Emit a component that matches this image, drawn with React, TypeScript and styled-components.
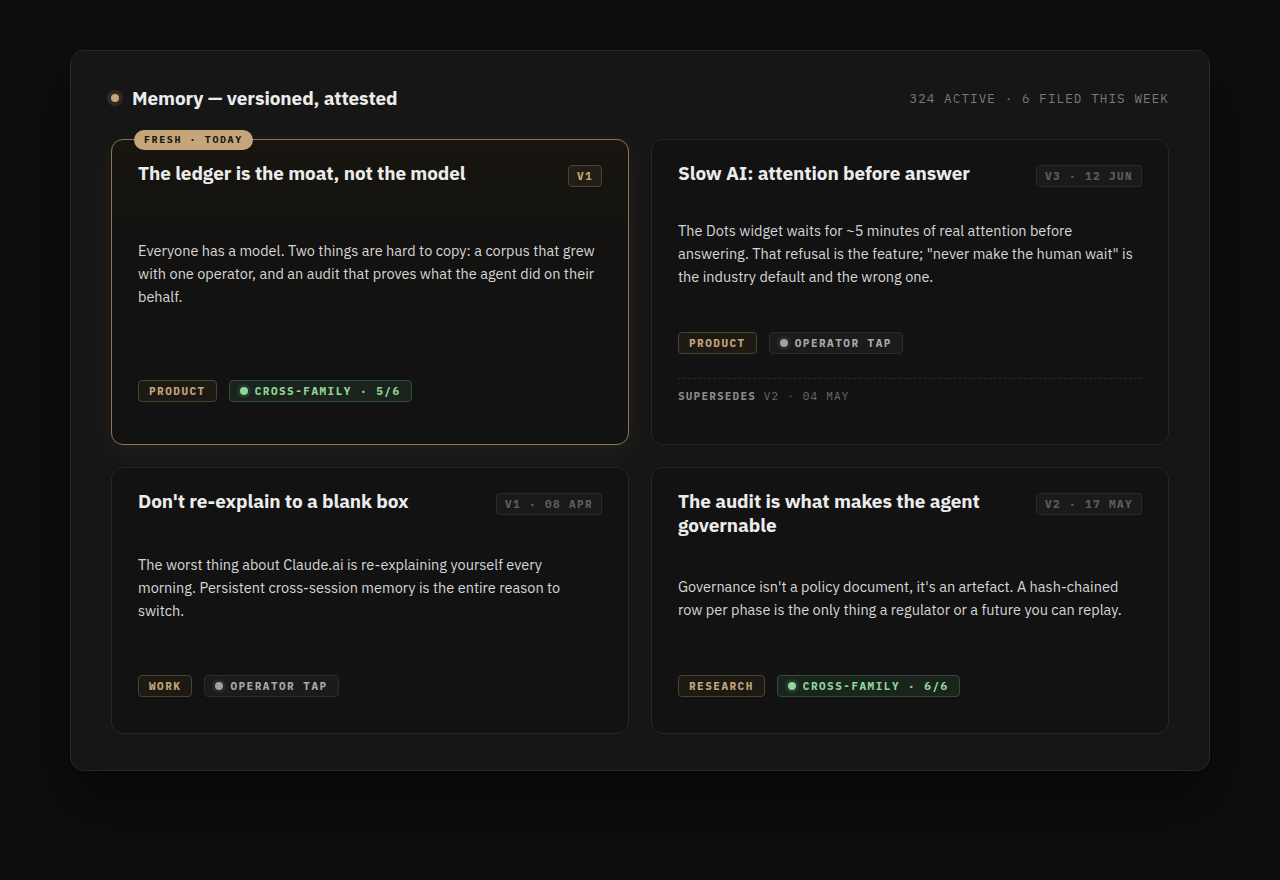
import React from "react";
import styled, { createGlobalStyle, css } from "styled-components";

type Tone = "topic" | "pass" | "tap";

type Tag = { label: string; tone: Tone };

type Entry = {
  title: string;
  version: string;
  body: string;
  tags: Tag[];
  fresh?: boolean;
  supersedes?: { label: string; ref: string };
};

const entries: Entry[] = [
  {
    title: "The ledger is the moat, not the model",
    version: "V1",
    body: "Everyone has a model. Two things are hard to copy: a corpus that grew with one operator, and an audit that proves what the agent did on their behalf.",
    tags: [
      { label: "PRODUCT", tone: "topic" },
      { label: "CROSS-FAMILY · 5/6", tone: "pass" },
    ],
    fresh: true,
  },
  {
    title: "Slow AI: attention before answer",
    version: "V3 · 12 JUN",
    body: 'The Dots widget waits for ~5 minutes of real attention before answering. That refusal is the feature; "never make the human wait" is the industry default and the wrong one.',
    tags: [
      { label: "PRODUCT", tone: "topic" },
      { label: "OPERATOR TAP", tone: "tap" },
    ],
    supersedes: { label: "SUPERSEDES", ref: "V2 · 04 MAY" },
  },
  {
    title: "Don't re-explain to a blank box",
    version: "V1 · 08 APR",
    body: "The worst thing about Claude.ai is re-explaining yourself every morning. Persistent cross-session memory is the entire reason to switch.",
    tags: [
      { label: "WORK", tone: "topic" },
      { label: "OPERATOR TAP", tone: "tap" },
    ],
  },
  {
    title: "The audit is what makes the agent governable",
    version: "V2 · 17 MAY",
    body: "Governance isn't a policy document, it's an artefact. A hash-chained row per phase is the only thing a regulator or a future you can replay.",
    tags: [
      { label: "RESEARCH", tone: "topic" },
      { label: "CROSS-FAMILY · 6/6", tone: "pass" },
    ],
  },
];

const sans = `"IBM Plex Sans", Inter, "Noto Sans", sans-serif`;
const mono = `"IBM Plex Mono", "DejaVu Sans Mono", "Liberation Mono", monospace`;

const GlobalStyle = createGlobalStyle`
  html, body {
    margin: 0;
    background: #0e0e0e;
    font-family: ${sans};
    -webkit-font-smoothing: antialiased;
  }
`;

const bodyGap = (e: Entry) => (e.fresh ? 52 : e.supersedes ? 32 : 38);

export default function App() {
  return (
    <>
      <GlobalStyle />
      <Page>
        <Panel>
          <Header>
            <TitleWrap>
              <Dot />
              <PanelTitle>Memory — versioned, attested</PanelTitle>
            </TitleWrap>
            <Stats>324 ACTIVE · 6 FILED THIS WEEK</Stats>
          </Header>
          <Grid>
            {entries.map((e) => (
              <Card key={e.title} $fresh={!!e.fresh}>
                {e.fresh && <FreshBadge>FRESH · TODAY</FreshBadge>}
                <CardHead>
                  <CardTitle>{e.title}</CardTitle>
                  <Version $fresh={!!e.fresh}>{e.version}</Version>
                </CardHead>
                <Body $gap={bodyGap(e)}>{e.body}</Body>
                <Tags $pinned={!e.supersedes}>
                  {e.tags.map((t) => (
                    <Chip key={t.label} $tone={t.tone}>
                      {t.tone !== "topic" && <ChipDot $tone={t.tone} />}
                      {t.label}
                    </Chip>
                  ))}
                </Tags>
                {e.supersedes && (
                  <Supersedes>
                    <strong>{e.supersedes.label}</strong> {e.supersedes.ref}
                  </Supersedes>
                )}
              </Card>
            ))}
          </Grid>
        </Panel>
      </Page>
    </>
  );
}

const Page = styled.div`
  min-height: 880px;
  padding: 50px 70px;
  box-sizing: border-box;
`;

const Panel = styled.div`
  background: #161616;
  border: 1px solid #282828;
  border-radius: 14px;
  padding: 35px 40px 36px;
  box-shadow: 0 30px 60px rgba(0, 0, 0, 0.5);
`;

const Header = styled.div`
  display: flex;
  align-items: center;
  justify-content: space-between;
  height: 24px;
  margin-bottom: 29px;
`;

const TitleWrap = styled.div`
  display: flex;
  align-items: center;
  gap: 13px;
`;

const Dot = styled.span`
  width: 8px;
  height: 8px;
  border-radius: 50%;
  background: #c4a67a;
  box-shadow: 0 0 0 4px rgba(196, 166, 122, 0.14);
`;

const PanelTitle = styled.h1`
  margin: 0;
  font-size: 19px;
  font-weight: 700;
  color: #ececec;
  letter-spacing: -0.1px;
`;

const Stats = styled.div`
  font-family: ${mono};
  font-size: 12.5px;
  letter-spacing: 1.15px;
  color: #7a7a7a;
`;

const Grid = styled.div`
  display: grid;
  grid-template-columns: 1fr 1fr;
  gap: 22px;
`;

const Card = styled.div<{ $fresh: boolean }>`
  position: relative;
  display: flex;
  flex-direction: column;
  background: #121212;
  border: 1px solid #262626;
  border-radius: 12px;
  padding: 21px 26px 36px;
  ${(p) =>
    p.$fresh &&
    css`
      padding-bottom: 42px;
      border-color: #8a7655;
      background: linear-gradient(180deg, #18150f 0%, #131210 30%, #121212 60%);
      box-shadow: 0 8px 28px rgba(196, 166, 122, 0.07);
    `}
`;

const FreshBadge = styled.span`
  position: absolute;
  top: -10px;
  left: 22px;
  background: #c4a67a;
  color: #1a1712;
  font-family: ${mono};
  font-size: 10px;
  font-weight: 700;
  letter-spacing: 1.6px;
  padding: 3px 10px;
  border-radius: 10px;
  line-height: 14px;
`;

const CardHead = styled.div`
  display: flex;
  align-items: flex-start;
  justify-content: space-between;
  gap: 20px;
`;

const CardTitle = styled.h2`
  margin: 0;
  font-size: 19px;
  font-weight: 700;
  line-height: 24px;
  color: #ececec;
  letter-spacing: -0.1px;
`;

const Version = styled.span<{ $fresh: boolean }>`
  flex-shrink: 0;
  margin-top: 4px;
  font-family: ${mono};
  font-size: 11px;
  font-weight: 700;
  letter-spacing: 1.4px;
  line-height: 14px;
  padding: 3px 8px;
  border-radius: 4px;
  color: #5e5e5e;
  background: #1a1a1a;
  border: 1px solid #2a2a2a;
  ${(p) =>
    p.$fresh &&
    css`
      color: #c4a67a;
      background: #221d15;
      border-color: #4e4332;
    `}
`;

const Body = styled.p<{ $gap: number }>`
  margin: ${(p) => p.$gap}px 0 0;
  font-size: 14.5px;
  line-height: 23px;
  color: #d6d6d6;
`;

const Tags = styled.div<{ $pinned: boolean }>`
  display: flex;
  gap: 12px;
  margin-top: ${(p) => (p.$pinned ? "auto" : "44px")};
  padding-top: ${(p) => (p.$pinned ? "53px" : "0")};
`;

const Chip = styled.span<{ $tone: Tone }>`
  display: inline-flex;
  align-items: center;
  gap: 7px;
  font-family: ${mono};
  font-size: 11px;
  font-weight: 700;
  letter-spacing: 1.5px;
  line-height: 14px;
  padding: 3px 10px;
  border-radius: 4px;
  border: 1px solid;
  ${(p) =>
    p.$tone === "topic" &&
    css`
      color: #c4a67a;
      background: #1d1a14;
      border-color: #4c4232;
    `}
  ${(p) =>
    p.$tone === "pass" &&
    css`
      color: #8fd69a;
      background: #1a241c;
      border-color: #324a36;
    `}
  ${(p) =>
    p.$tone === "tap" &&
    css`
      color: #a8a8a8;
      background: #1b1b1b;
      border-color: #2c2c2c;
    `}
`;

const ChipDot = styled.span<{ $tone: Tone }>`
  width: 8px;
  height: 8px;
  border-radius: 50%;
  background: ${(p) => (p.$tone === "pass" ? "#8fd69a" : "#a0a0a0")};
  box-shadow: 0 0 0 3px
    ${(p) => (p.$tone === "pass" ? "rgba(143,214,154,0.1)" : "rgba(160,160,160,0.1)")};
`;

const Supersedes = styled.div`
  margin-top: 24px;
  padding: 10px 0 5px;
  border-top: 1px dashed #2a2a2a;
  font-family: ${mono};
  font-size: 11px;
  letter-spacing: 1.2px;
  color: #6a6a6a;

  strong {
    color: #8a8a8a;
    font-weight: 700;
  }
`;
